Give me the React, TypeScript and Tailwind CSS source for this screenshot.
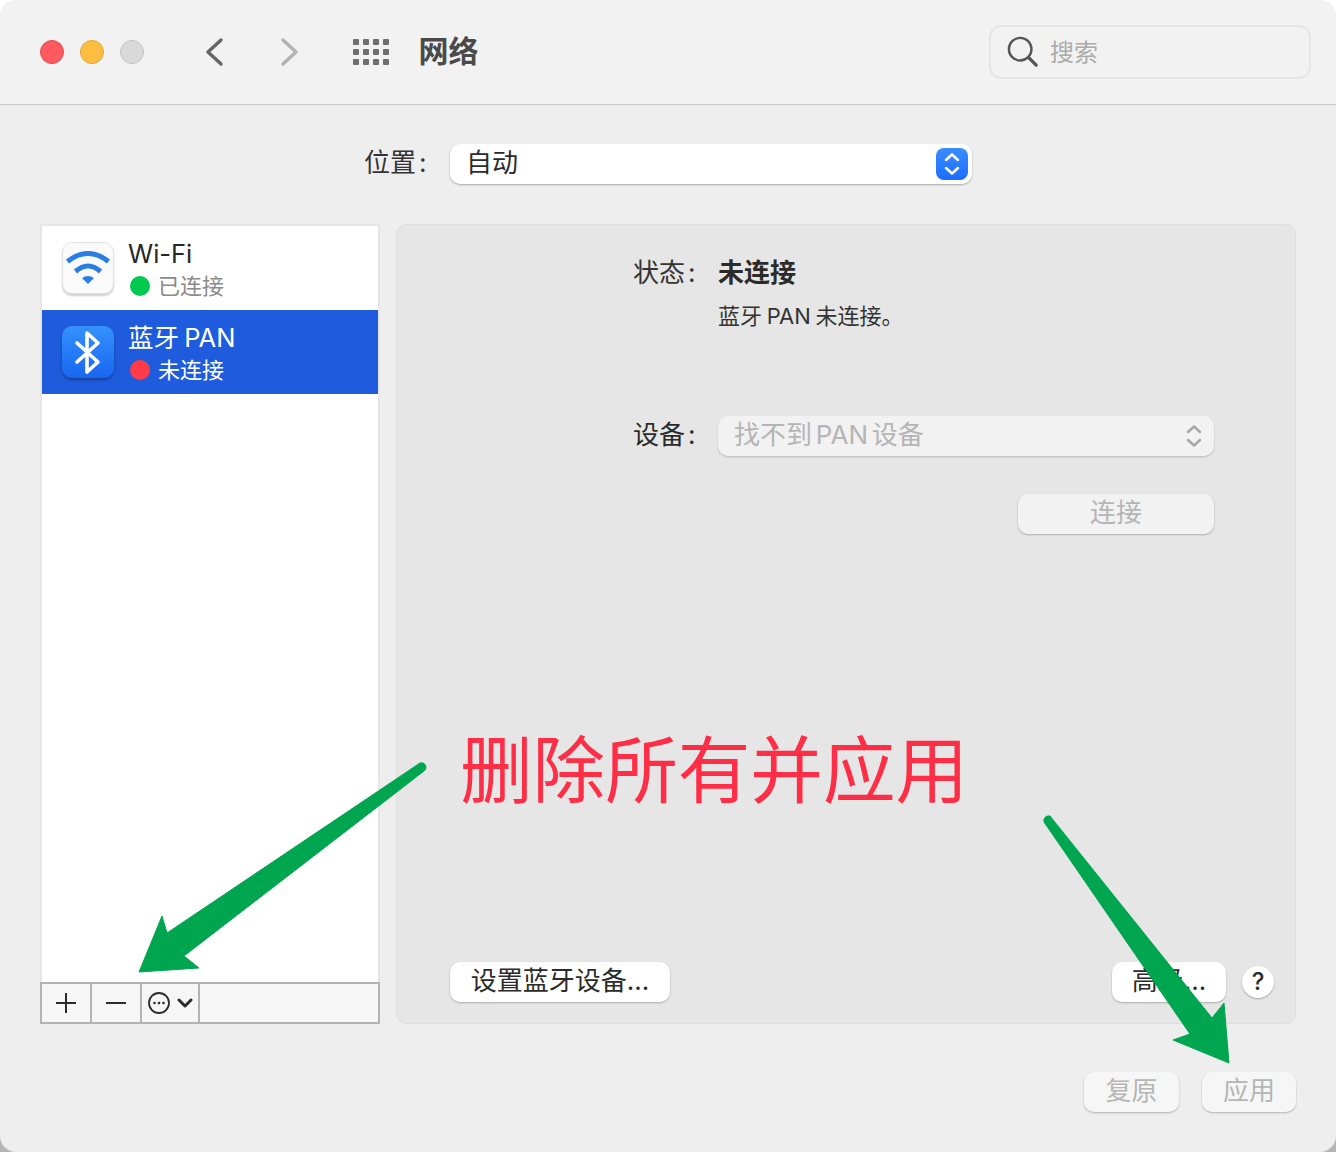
function Chevrons({ className }: { className: string }) {
  return (
    <svg width="16" height="24" viewBox="0 0 16 24" fill="none" className={className} stroke="currentColor" strokeWidth="2.5" strokeLinecap="round" strokeLinejoin="round">
      <path d="M2 8 L8 2.5 L14 8" />
      <path d="M2 16 L8 21.5 L14 16" />
    </svg>
  );
}

function WifiIcon() {
  return (
    <div className="w-[52px] h-[52px] rounded-[10px] bg-[#fafafa] border border-[#e2e2e2] shadow-[0_2px_2px_rgba(0,0,0,0.2)] shrink-0">
      <svg width="50" height="50" viewBox="0 0 50 50" fill="none">
        <path d="M4.5 18.5 Q25 2.5 45.5 18.5" stroke="#2a7de1" strokeWidth="5" />
        <path d="M12.5 28.5 Q25 17.5 37.5 28.5" stroke="#2a7de1" strokeWidth="5" />
        <path d="M19 35 Q25 31 31 35 L25 41 Z" fill="#2a7de1" />
      </svg>
    </div>
  );
}

function BluetoothIcon() {
  return (
    <div className="w-[52px] h-[52px] rounded-[10px] bg-gradient-to-b from-[#3491ff] to-[#1a66f0] shadow-[0_2px_3px_rgba(0,0,0,0.3)] shrink-0">
      <svg width="52" height="52" viewBox="0 0 52 52" fill="none" stroke="#fff" strokeWidth="3.6" strokeLinecap="round" strokeLinejoin="round">
        <path d="M15 17 L36 36 L25 46 V7 L36 17 L15 36" />
      </svg>
    </div>
  );
}

function Service({ name, status, dot, active, icon }: { name: string; status: string; dot: string; active?: boolean; icon: React.ReactNode }) {
  return (
    <div className={`h-[84px] flex items-center pl-[20px] gap-[14px] ${active ? "bg-[#1f5bdd] text-white" : "text-[#262626]"}`}>
      {icon}
      <div className="flex flex-col pt-[4px]">
        <div className="text-[25.5px] leading-[32px] [word-spacing:-2px]">{name}</div>
        <div className="flex items-center gap-[8px] pl-[2px] text-[22px] leading-[32px]">
          <span className={`w-[20px] h-[20px] rounded-full ${dot}`} />
          <span className={active ? "text-white" : "text-[#8a8a8a]"}>{status}</span>
        </div>
      </div>
    </div>
  );
}

function Button({ label, className }: { label: string; className: string }) {
  return (
    <div className={`h-[40px] rounded-[10px] flex items-center justify-center pb-[4px] text-[26px] shadow-[0_1px_2px_rgba(0,0,0,0.25)] ${className}`}>
      {label}
    </div>
  );
}

export default function App() {
  return (
    <div className="relative w-[1336px] h-[1152px] bg-gradient-to-b from-white via-white to-[#b5b5b5] font-['Inter','Noto_Sans_CJK_SC',sans-serif]">
      <div className="w-full h-full rounded-[16px] overflow-hidden bg-[#eeeeee] flex flex-col">
        {/* title bar */}
        <div className="h-[105px] shrink-0 bg-[#f2f2f2] border-b border-[#c9c9c9] flex items-center pl-[40px] pr-[25px]">
          <div className="flex gap-[16px]">
            <span className="w-[24px] h-[24px] rounded-full bg-[#ff5a5f] border border-[#e24b4b]" />
            <span className="w-[24px] h-[24px] rounded-full bg-[#febc40] border border-[#e5a630]" />
            <span className="w-[24px] h-[24px] rounded-full bg-[#d9d9d9] border border-[#c2c2c2]" />
          </div>
          <svg width="20" height="30" viewBox="0 0 20 30" fill="none" stroke="#666" strokeWidth="3.5" strokeLinecap="round" strokeLinejoin="round" className="ml-[60px]">
            <path d="M17 3 L4 15 L17 27" />
          </svg>
          <svg width="20" height="30" viewBox="0 0 20 30" fill="none" stroke="#b3b3b3" strokeWidth="3.5" strokeLinecap="round" strokeLinejoin="round" className="ml-[56px]">
            <path d="M3 3 L16 15 L3 27" />
          </svg>
          <div className="ml-[53px] grid grid-cols-4 gap-x-[4.5px] gap-y-[4.5px]">
            {Array.from({ length: 12 }).map((_, i) => (
              <span key={i} className="w-[5.5px] h-[5.5px] rounded-[1px] bg-[#6e6e6e]" />
            ))}
          </div>
          <div className="ml-[30px] pb-[2px] text-[30px] font-semibold text-[#4a4a4a] leading-none">网络</div>
          <div className="ml-auto w-[322px] h-[54px] rounded-[12px] border-2 border-[#e6e6e6] flex items-center pl-[16px] gap-[11px]">
            <svg width="32" height="32" viewBox="0 0 34 34" fill="none" stroke="#555" strokeLinecap="round">
              <circle cx="14" cy="14" r="12" strokeWidth="2.5" />
              <path d="M23 23 L31 31" strokeWidth="3.5" />
            </svg>
            <span className="text-[24px] text-[#ababab] pt-[1px]">搜索</span>
          </div>
        </div>

        {/* location */}
        <div className="flex items-center mt-[39px] pl-[364px] h-[40px] shrink-0">
          <span className="w-[86px] pb-[3px] text-[26px] text-[#333]">位置<span className="ml-[3px]">:</span></span>
          <div className="w-[522px] h-[40px] rounded-[10px] bg-white shadow-[0_1px_2px_rgba(0,0,0,0.3)] flex items-center justify-between pl-[16px] pr-[4px]">
            <span className="text-[26px] text-[#2b2b2b] pb-[3px]">自动</span>
            <div className="w-[32px] h-[32px] rounded-[8px] bg-gradient-to-b from-[#3a8dff] to-[#1c6cff] flex items-center justify-center">
              <Chevrons className="text-white" />
            </div>
          </div>
        </div>

        {/* main */}
        <div className="flex gap-[16px] pl-[40px] pr-[40px] mt-[40px] h-[800px] shrink-0">
          <div className="w-[340px] flex flex-col border-x-2 border-t-2 border-[#e6e6e6] bg-white">
            <Service name="Wi-Fi" status="已连接" dot="bg-[#00c94f]" icon={<WifiIcon />} />
            <Service name="蓝牙 PAN" status="未连接" dot="bg-[#ff3b48]" active icon={<BluetoothIcon />} />
            <div className="flex-1" />
            <div className="-mx-[2px] h-[42px] border-2 border-[#b3b3b3] bg-[#f6f6f6] flex text-[#2b2b2b]">
              <div className="w-[50px] border-r-2 border-[#b3b3b3] flex items-center justify-center">
                <svg width="22" height="22" viewBox="0 0 22 22" stroke="currentColor" strokeWidth="2">
                  <path d="M11 1 V21 M1 11 H21" />
                </svg>
              </div>
              <div className="w-[50px] border-r-2 border-[#b3b3b3] flex items-center justify-center">
                <svg width="22" height="22" viewBox="0 0 22 22" stroke="currentColor" strokeWidth="2">
                  <path d="M1 11 H21" />
                </svg>
              </div>
              <div className="w-[58px] border-r-2 border-[#b3b3b3] flex items-center pl-[6px] gap-[7px]">
                <svg width="22" height="22" viewBox="0 0 22 22" fill="none">
                  <circle cx="11" cy="11" r="10" stroke="currentColor" strokeWidth="1.8" />
                  <circle cx="6.5" cy="11" r="1.3" fill="currentColor" />
                  <circle cx="11" cy="11" r="1.3" fill="currentColor" />
                  <circle cx="15.5" cy="11" r="1.3" fill="currentColor" />
                </svg>
                <svg width="16" height="12" viewBox="0 0 16 12" fill="none" stroke="currentColor" strokeWidth="3" strokeLinecap="round" strokeLinejoin="round">
                  <path d="M2 3 L8 9 L14 3" />
                </svg>
              </div>
            </div>
          </div>

          <div className="w-[900px] rounded-[10px] bg-[#e6e6e6] border border-[#dedede] flex flex-col pt-[31px] pb-[21px]">
            <div className="flex items-center h-[34px]">
              <span className="ml-[236px] w-[85px] text-[26px] pb-[2px] text-[#333]">状态<span className="ml-[3px]">:</span></span>
              <span className="text-[26px] font-bold text-[#2b2b2b] pb-[2px]">未连接</span>
            </div>
            <div className="ml-[321px] mt-[9px] h-[34px] flex items-center text-[22px] text-[#333] [word-spacing:-1.5px]">蓝牙 PAN 未连接。</div>
            <div className="flex items-center mt-[83px] h-[40px]">
              <span className="ml-[236px] w-[85px] pb-[3px] text-[26px] text-[#2b2b2b]">设备<span className="ml-[3px]">:</span></span>
              <div className="w-[496px] h-[40px] rounded-[10px] bg-[#f2f2f2] shadow-[0_1px_2px_rgba(0,0,0,0.2)] flex items-center justify-between pl-[16px] pr-[12px]">
                <span className="text-[26px] text-[#b5b5b5] pb-[3px] [word-spacing:-3.5px]">找不到 PAN 设备</span>
                <Chevrons className="text-[#a8a8a8]" />
              </div>
            </div>
            <Button label="连接" className="self-end mr-[81px] mt-[38px] w-[196px] bg-[#f2f2f2] text-[#b5b5b5]" />
            <div className="mt-auto flex items-center pl-[53px] pr-[21px]">
              <Button label="设置蓝牙设备..." className="w-[220px] bg-white text-[#2b2b2b]" />
              <Button label="高级..." className="ml-auto w-[114px] bg-white text-[#2b2b2b]" />
              <div className="ml-[16px] w-[32px] h-[32px] rounded-full bg-white shadow-[0_1px_2px_rgba(0,0,0,0.3)] flex items-center justify-center text-[24px] font-medium text-[#2b2b2b]">?</div>
            </div>
          </div>
        </div>

        {/* footer */}
        <div className="flex justify-end gap-[23px] pr-[40px] mt-[48px]">
          <Button label="复原" className="w-[95px] bg-[#f6f6f6] text-[#b5b5b5]" />
          <Button label="应用" className="w-[94px] bg-[#f6f6f6] text-[#b5b5b5]" />
        </div>
      </div>

      {/* annotation drawn over the screenshot */}
      <div className="absolute left-[460px] top-[726px] text-[72.6px] leading-[90px] text-[#ff2e47] whitespace-nowrap">删除所有并应用</div>
      <svg className="absolute inset-0 pointer-events-none" width="1336" height="1152" viewBox="0 0 1336 1152">
        <g fill="#00a64f" stroke="#00a64f" strokeWidth="1" strokeLinejoin="round">
          <path d="M139 972 L162 916 L167 933 L420 763 Q425 762 426 767 Q426 770 424 771 L184 956 L199 968 Z" />
          <path d="M1229 1063 L1224 1003 L1212 1018 L1050 816 Q1046 815 1044 819 L1044 822 L1190 1034 L1173 1040 Z" />
        </g>
      </svg>
    </div>
  );
}
